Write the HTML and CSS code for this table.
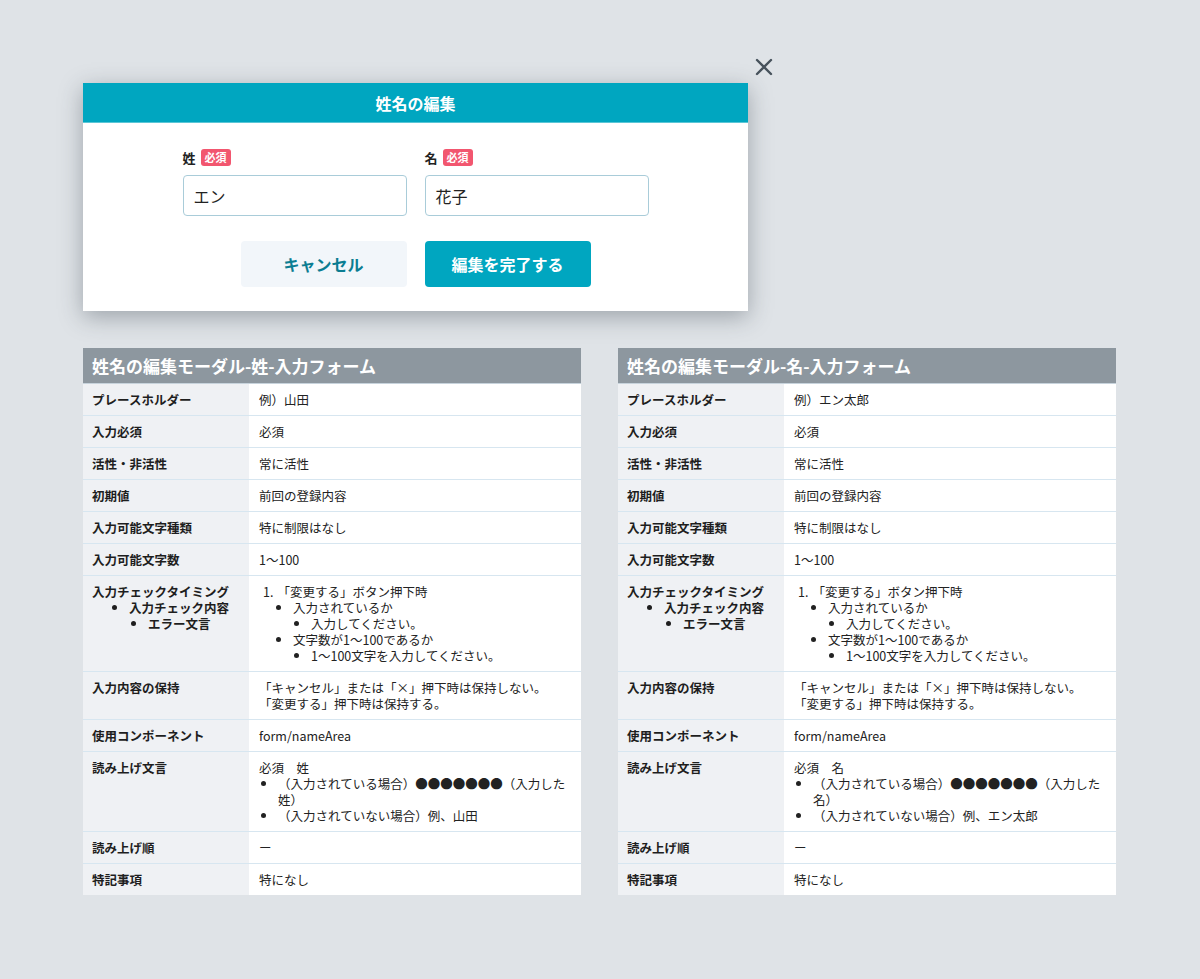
FILE: index.html
```html
<!DOCTYPE html>
<html lang="ja">
<head>
<meta charset="utf-8">
<title>姓名の編集</title>
<link rel="stylesheet" href="styles.css">
</head>
<body>
<div class="page">
  <div class="modal">
    <button class="close" aria-label="閉じる">
      <svg width="18" height="18" viewBox="0 0 18 18"><path d="M2 2 L16 16 M16 2 L2 16" stroke="#47525c" stroke-width="2.4" stroke-linecap="round" fill="none"/></svg>
    </button>
    <div class="modal-head">姓名の編集</div>
    <div class="modal-body">
      <div class="fields">
        <div class="field">
          <div class="label">姓<span class="badge">必須</span></div>
          <div class="input">エン</div>
        </div>
        <div class="field">
          <div class="label">名<span class="badge">必須</span></div>
          <div class="input">花子</div>
        </div>
      </div>
      <div class="buttons">
        <button class="btn btn-cancel">キャンセル</button>
        <button class="btn btn-primary">編集を完了する</button>
      </div>
    </div>
  </div>

  <div class="tables">
    <section class="spec">
      <h2 class="spec-title">姓名の編集モーダル-姓-入力フォーム</h2>
      <div class="row"><div class="k">プレースホルダー</div><div class="v">例）山田</div></div>
      <div class="row"><div class="k">入力必須</div><div class="v">必須</div></div>
      <div class="row"><div class="k">活性・非活性</div><div class="v">常に活性</div></div>
      <div class="row"><div class="k">初期値</div><div class="v">前回の登録内容</div></div>
      <div class="row"><div class="k">入力可能文字種類</div><div class="v">特に制限はなし</div></div>
      <div class="row"><div class="k">入力可能文字数</div><div class="v">1〜100</div></div>
      <div class="row">
        <div class="k">入力チェックタイミング
          <ul class="kl1"><li>入力チェック内容<ul class="kl2"><li>エラー文言</li></ul></li></ul>
        </div>
        <div class="v">
          <ol class="steps"><li>「変更する」ボタン押下時
            <ul class="vl1">
              <li>入力されているか<ul class="vl2"><li>入力してください。</li></ul></li>
              <li>文字数が1〜100であるか<ul class="vl2"><li>1〜100文字を入力してください。</li></ul></li>
            </ul>
          </li></ol>
        </div>
      </div>
      <div class="row"><div class="k">入力内容の保持</div><div class="v">「キャンセル」または「×」押下時は保持しない。<br>「変更する」押下時は保持する。</div></div>
      <div class="row"><div class="k">使用コンポーネント</div><div class="v">form/nameArea</div></div>
      <div class="row"><div class="k">読み上げ文言</div><div class="v">必須　姓
        <ul class="read"><li>（入力されている場合）●●●●●●●（入力した姓）</li><li>（入力されていない場合）例、山田</li></ul>
      </div></div>
      <div class="row"><div class="k">読み上げ順</div><div class="v">ー</div></div>
      <div class="row"><div class="k">特記事項</div><div class="v">特になし</div></div>
    </section>

    <section class="spec">
      <h2 class="spec-title">姓名の編集モーダル-名-入力フォーム</h2>
      <div class="row"><div class="k">プレースホルダー</div><div class="v">例）エン太郎</div></div>
      <div class="row"><div class="k">入力必須</div><div class="v">必須</div></div>
      <div class="row"><div class="k">活性・非活性</div><div class="v">常に活性</div></div>
      <div class="row"><div class="k">初期値</div><div class="v">前回の登録内容</div></div>
      <div class="row"><div class="k">入力可能文字種類</div><div class="v">特に制限はなし</div></div>
      <div class="row"><div class="k">入力可能文字数</div><div class="v">1〜100</div></div>
      <div class="row">
        <div class="k">入力チェックタイミング
          <ul class="kl1"><li>入力チェック内容<ul class="kl2"><li>エラー文言</li></ul></li></ul>
        </div>
        <div class="v">
          <ol class="steps"><li>「変更する」ボタン押下時
            <ul class="vl1">
              <li>入力されているか<ul class="vl2"><li>入力してください。</li></ul></li>
              <li>文字数が1〜100であるか<ul class="vl2"><li>1〜100文字を入力してください。</li></ul></li>
            </ul>
          </li></ol>
        </div>
      </div>
      <div class="row"><div class="k">入力内容の保持</div><div class="v">「キャンセル」または「×」押下時は保持しない。<br>「変更する」押下時は保持する。</div></div>
      <div class="row"><div class="k">使用コンポーネント</div><div class="v">form/nameArea</div></div>
      <div class="row"><div class="k">読み上げ文言</div><div class="v">必須　名
        <ul class="read"><li>（入力されている場合）●●●●●●●（入力した名）</li><li>（入力されていない場合）例、エン太郎</li></ul>
      </div></div>
      <div class="row"><div class="k">読み上げ順</div><div class="v">ー</div></div>
      <div class="row"><div class="k">特記事項</div><div class="v">特になし</div></div>
    </section>
  </div>
</div>
</body>
</html>
```

FILE: styles.css
```css
* { box-sizing: border-box; }
html, body { margin: 0; padding: 0; }
body {
  background: #dfe3e7;
  font-family: "Noto Sans CJK JP", "Noto Sans", sans-serif;
  color: #222;
  width: 1200px;
  min-height: 979px;
}
.page {
  padding: 83px 0 0 83px;
}

/* Modal */
.modal {
  position: relative;
  width: 665px;
  background: #fff;
  box-shadow: 0 6px 22px rgba(50, 60, 70, 0.38);
}
.close {
  position: absolute;
  right: -25px;
  top: -25px;
  width: 18px;
  height: 18px;
  padding: 0;
  border: 0;
  background: transparent;
  display: flex;
}
.modal-head {
  height: 40px;
  background: #00a6c0;
  color: #fff;
  font-weight: 700;
  font-size: 16px;
  display: flex;
  align-items: center;
  justify-content: center;
  border-bottom: 1px solid #5cc6d6;
}
.modal-body {
  padding: 25px 0 24px;
  display: flex;
  flex-direction: column;
  align-items: center;
}
.fields {
  display: flex;
  gap: 18px;
}
.field {
  width: 224px;
}
.label {
  display: flex;
  align-items: center;
  font-size: 13px;
  font-weight: 700;
  height: 18px;
  margin-bottom: 9px;
  color: #222;
}
.badge {
  margin-left: 5px;
  background: #f2566f;
  color: #fff;
  font-size: 11px;
  font-weight: 700;
  line-height: 17px;
  padding: 0 4px;
  border-radius: 3px;
}
.input {
  height: 41px;
  border: 1px solid #a9ccd9;
  border-radius: 4px;
  padding: 0 10px;
  display: flex;
  align-items: center;
  font-size: 16px;
  color: #222;
}
.buttons {
  margin-top: 25px;
  display: flex;
  gap: 18px;
}
.btn {
  width: 166px;
  height: 46px;
  border: 0;
  border-radius: 4px;
  font-family: inherit;
  font-size: 16px;
  font-weight: 700;
}
.btn-cancel {
  background: #f2f6fa;
  color: #0b7d92;
}
.btn-primary {
  background: #00a6c0;
  color: #fff;
}

/* Spec tables */
.tables {
  margin-top: 37px;
  display: flex;
  gap: 37px;
}
.spec {
  width: 498px;
  background: #fff;
}
.spec-title {
  margin: 0;
  height: 36px;
  background: #8d979f;
  color: #fff;
  font-size: 17px;
  font-weight: 700;
  padding: 0 9px;
  display: flex;
  align-items: center;
  border-bottom: 1px solid #c7d3dc;
}
.row {
  display: grid;
  grid-template-columns: 166px 1fr;
  border-bottom: 1px solid #d7e6f0;
  font-size: 12.5px;
  line-height: 16px;
}
.row:last-child { border-bottom: 0; }
.k {
  background: #eff1f4;
  font-weight: 700;
  padding: 8px 9px 7px;
  color: #1e1e1e;
}
.v {
  padding: 8px 10px 7px 10px;
  color: #222;
}
ul, ol { margin: 0; }
ul, ul ul, ul ul ul { list-style-type: disc; }
.kl1 { padding-left: 37px; }
.kl2 { padding-left: 19px; }
.steps {
  list-style: none;
  padding-left: 4px;
}
.steps > li::before {
  content: "1.";
  margin-right: 4px;
}
.vl1 { padding-left: 30px; }
.vl2 { padding-left: 18px; }
.read { padding-left: 19px; }
```
